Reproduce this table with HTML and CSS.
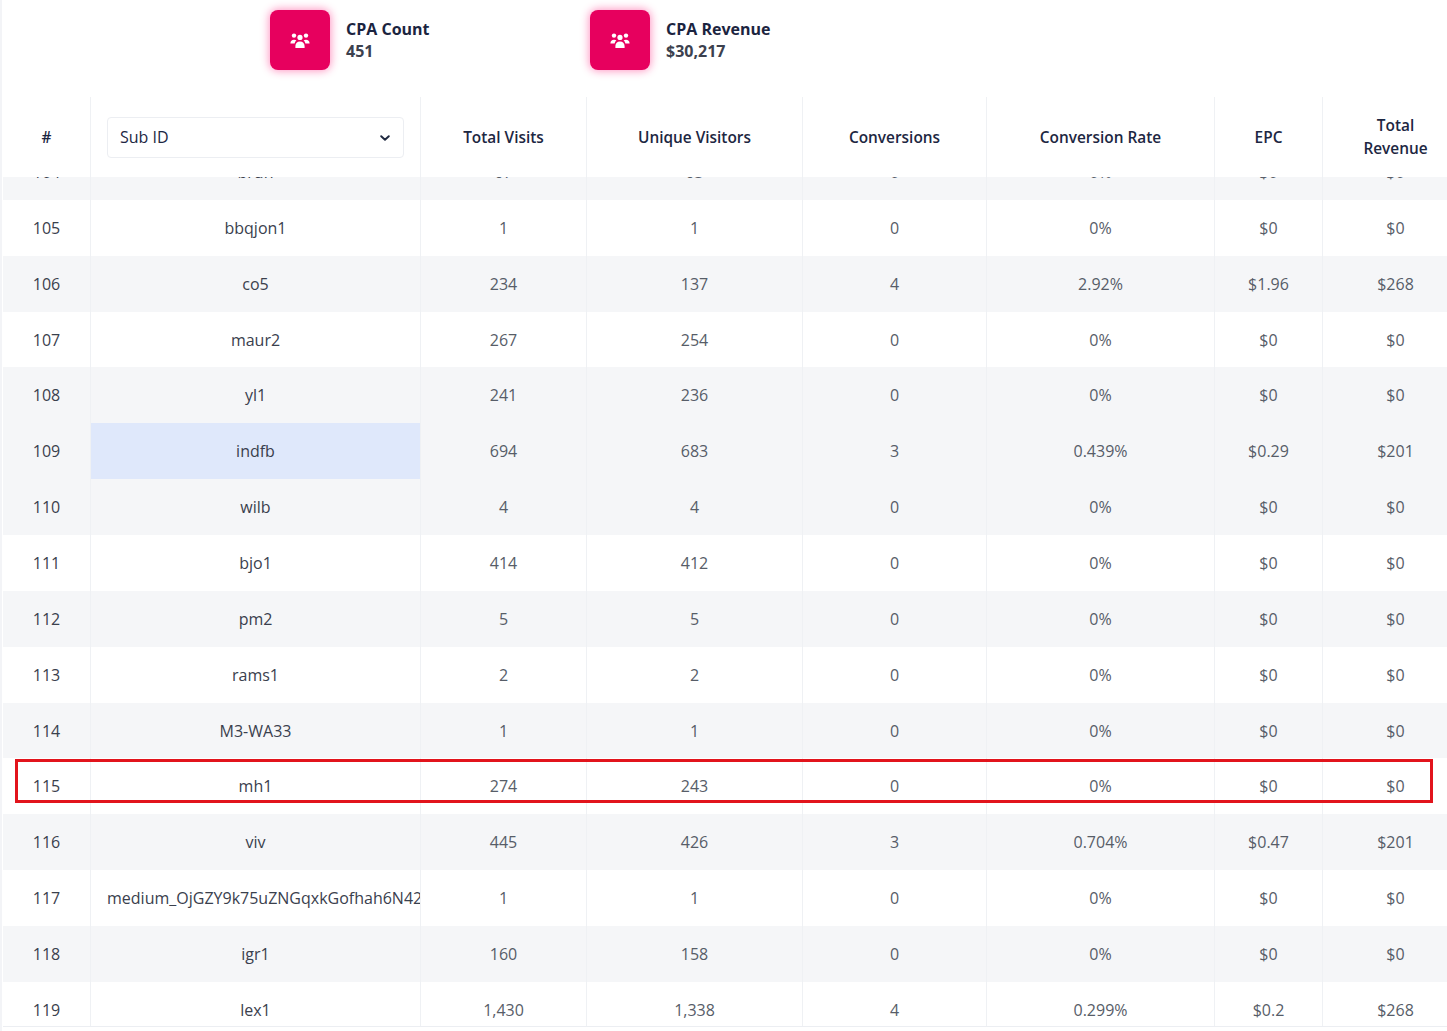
FILE: index.html
```html
<!DOCTYPE html>
<html lang="en">
<head>
<meta charset="utf-8">
<title>Sub ID Report</title>
<link rel="stylesheet" href="styles.css">
</head>
<body>
<div class="page">
  <div class="stats">
    <div class="stat">
      <div class="stat-icon">
        <svg viewBox="0 0 20 15" width="20" height="15" aria-hidden="true">
          <circle cx="4" cy="2.6" r="2.2" fill="#fff"/>
          <circle cx="16" cy="2.6" r="2.2" fill="#fff"/>
          <circle cx="10" cy="4.4" r="2.6" fill="#fff"/>
          <path d="M0.4 10.4C0.4 8.2 1.9 6.8 4 6.8C5 6.8 5.8 7.1 6.4 7.6C5.4 8.4 4.8 9.4 4.6 10.4Z" fill="#fff"/>
          <path d="M19.6 10.4C19.6 8.2 18.1 6.8 16 6.8C15 6.8 14.2 7.1 13.6 7.6C14.6 8.4 15.2 9.4 15.4 10.4Z" fill="#fff"/>
          <path d="M5.4 15V13.1C5.4 10.7 7.3 8.6 10 8.6C12.7 8.6 14.6 10.7 14.6 13.1V15Z" fill="#fff"/>
        </svg>
      </div>
      <div class="stat-text">
        <div class="stat-title">CPA Count</div>
        <div class="stat-value">451</div>
      </div>
    </div>
    <div class="stat">
      <div class="stat-icon">
        <svg viewBox="0 0 20 15" width="20" height="15" aria-hidden="true">
          <circle cx="4" cy="2.6" r="2.2" fill="#fff"/>
          <circle cx="16" cy="2.6" r="2.2" fill="#fff"/>
          <circle cx="10" cy="4.4" r="2.6" fill="#fff"/>
          <path d="M0.4 10.4C0.4 8.2 1.9 6.8 4 6.8C5 6.8 5.8 7.1 6.4 7.6C5.4 8.4 4.8 9.4 4.6 10.4Z" fill="#fff"/>
          <path d="M19.6 10.4C19.6 8.2 18.1 6.8 16 6.8C15 6.8 14.2 7.1 13.6 7.6C14.6 8.4 15.2 9.4 15.4 10.4Z" fill="#fff"/>
          <path d="M5.4 15V13.1C5.4 10.7 7.3 8.6 10 8.6C12.7 8.6 14.6 10.7 14.6 13.1V15Z" fill="#fff"/>
        </svg>
      </div>
      <div class="stat-text">
        <div class="stat-title">CPA Revenue</div>
        <div class="stat-value">$30,217</div>
      </div>
    </div>
  </div>

  <div class="table-scroll" id="tableScroll">
    <table class="report">
      <colgroup>
        <col class="w-num"><col class="w-sub"><col class="w-visits"><col class="w-unique">
        <col class="w-conv"><col class="w-rate"><col class="w-epc"><col class="w-rev">
      </colgroup>
      <thead>
        <tr>
          <th>#</th>
          <th class="th-select">
            <div class="select">
              <span>Sub ID</span>
              <svg class="chevron" viewBox="0 0 10 6" width="10" height="6" aria-hidden="true"><path d="M1.2 1.2L5 4.8L8.8 1.2" fill="none" stroke="#1f2940" stroke-width="1.9" stroke-linecap="round" stroke-linejoin="round"/></svg>
            </div>
          </th>
          <th>Total Visits</th>
          <th>Unique Visitors</th>
          <th>Conversions</th>
          <th>Conversion Rate</th>
          <th>EPC</th>
          <th class="th-wrap">Total Revenue</th>
        </tr>
      </thead>
      <tbody>
        <tr><td class="c-id">104</td><td class="c-sub">brun</td><td>67</td><td>63</td><td>0</td><td>0%</td><td>$0</td><td>$0</td></tr>
        <tr><td class="c-id">105</td><td class="c-sub">bbqjon1</td><td>1</td><td>1</td><td>0</td><td>0%</td><td>$0</td><td>$0</td></tr>
        <tr><td class="c-id">106</td><td class="c-sub">co5</td><td>234</td><td>137</td><td>4</td><td>2.92%</td><td>$1.96</td><td>$268</td></tr>
        <tr><td class="c-id">107</td><td class="c-sub">maur2</td><td>267</td><td>254</td><td>0</td><td>0%</td><td>$0</td><td>$0</td></tr>
        <tr><td class="c-id">108</td><td class="c-sub">yl1</td><td>241</td><td>236</td><td>0</td><td>0%</td><td>$0</td><td>$0</td></tr>
        <tr class="is-hover"><td class="c-id">109</td><td class="c-sub is-active">indfb</td><td>694</td><td>683</td><td>3</td><td>0.439%</td><td>$0.29</td><td>$201</td></tr>
        <tr><td class="c-id">110</td><td class="c-sub">wilb</td><td>4</td><td>4</td><td>0</td><td>0%</td><td>$0</td><td>$0</td></tr>
        <tr><td class="c-id">111</td><td class="c-sub">bjo1</td><td>414</td><td>412</td><td>0</td><td>0%</td><td>$0</td><td>$0</td></tr>
        <tr><td class="c-id">112</td><td class="c-sub">pm2</td><td>5</td><td>5</td><td>0</td><td>0%</td><td>$0</td><td>$0</td></tr>
        <tr><td class="c-id">113</td><td class="c-sub">rams1</td><td>2</td><td>2</td><td>0</td><td>0%</td><td>$0</td><td>$0</td></tr>
        <tr><td class="c-id">114</td><td class="c-sub">M3-WA33</td><td>1</td><td>1</td><td>0</td><td>0%</td><td>$0</td><td>$0</td></tr>
        <tr><td class="c-id">115</td><td class="c-sub">mh1</td><td>274</td><td>243</td><td>0</td><td>0%</td><td>$0</td><td>$0</td></tr>
        <tr><td class="c-id">116</td><td class="c-sub">viv</td><td>445</td><td>426</td><td>3</td><td>0.704%</td><td>$0.47</td><td>$201</td></tr>
        <tr><td class="c-id">117</td><td class="c-sub">medium_OjGZY9k75uZNGqxkGofhah6N42xQ8vLp</td><td>1</td><td>1</td><td>0</td><td>0%</td><td>$0</td><td>$0</td></tr>
        <tr><td class="c-id">118</td><td class="c-sub">igr1</td><td>160</td><td>158</td><td>0</td><td>0%</td><td>$0</td><td>$0</td></tr>
        <tr><td class="c-id">119</td><td class="c-sub">lex1</td><td>1,430</td><td>1,338</td><td>4</td><td>0.299%</td><td>$0.2</td><td>$268</td></tr>
      </tbody>
    </table>
  </div>
</div>
<div class="highlight-box"></div>
<script src="script.js"></script>
</body>
</html>
```

FILE: styles.css
```css
* { box-sizing: border-box; }

html, body {
  margin: 0;
  padding: 0;
  background: #ffffff;
}

body {
  font-family: "Open Sans", "Noto Sans", "Liberation Sans", sans-serif;
  color: #4b515c;
  overflow: hidden;
}

.page {
  border-left: 2px solid #f3f4f7;
  padding-left: 1px;
  min-height: 100vh;
}

/* ---------- stat cards ---------- */
.stats {
  display: flex;
  height: 97px;
  padding: 10px 0 0 267px;
}

.stat {
  width: 320px;
  display: flex;
  align-items: center;
  gap: 16px;
  height: 60px;
}

.stat-icon {
  width: 60px;
  height: 60px;
  flex: 0 0 60px;
  border-radius: 8px;
  background: #e7005e;
  box-shadow: 0 0 9px 1px rgba(255, 20, 120, 0.45);
  display: flex;
  align-items: center;
  justify-content: center;
}

.stat-icon svg { display: block; margin-top: 1px; }

.stat-text {
  display: flex;
  flex-direction: column;
  font-weight: 700;
  font-size: 16px;
  line-height: 22px;
}

.stat-title { color: #1b2440; }
.stat-value { color: #3c414e; }

/* ---------- table ---------- */
.table-scroll {
  height: 930px;
  overflow: hidden;
  border-bottom: 1px solid #eceef2;
}

.report {
  width: 1466px;
  table-layout: fixed;
  border-collapse: separate;
  border-spacing: 0;
  font-size: 16px;
}

.w-num { width: 88px; }
.w-sub { width: 330px; }
.w-visits { width: 166px; }
.w-unique { width: 216px; }
.w-conv { width: 184px; }
.w-rate { width: 228px; }
.w-epc { width: 108px; }
.w-rev { width: 146px; }

.report th {
  position: sticky;
  top: 0;
  z-index: 2;
  height: 80px;
  background: #ffffff;
  color: #1d2742;
  font-weight: 600;
  font-size: 15.4px;
  line-height: 23px;
  text-align: center;
  vertical-align: middle;
  padding: 0 16px;
  border-right: 1px solid #eff1f4;
}

.report th.th-wrap { padding: 0 26px; }

.report th.th-select { padding: 0 16px; text-align: left; font-size: 16px; }

.select {
  height: 41px;
  border: 1px solid #eceef2;
  border-radius: 4px;
  display: flex;
  align-items: center;
  justify-content: space-between;
  padding: 0 13px 0 12px;
  font-weight: 500;
  color: #1d2742;
  margin-top: 1px;
}

.chevron { display: block; }

.report td {
  height: 55.86px;
  padding: 0 16px;
  text-align: center;
  vertical-align: middle;
  white-space: nowrap;
  overflow: hidden;
  border-right: 1px solid #eff1f4;
  color: #575d68;
  font-weight: 400;
  line-height: 22px;
}

.report tbody tr:nth-child(odd) td { background: #f5f6f8; }
.report tbody tr.is-hover td { background: #f5f6f8; }
.report tbody tr td.is-active { background: #dfe8fb; }

.report td.c-id,
.report td.c-sub {
  color: #3a404d;
  font-weight: 500;
}

.report td.c-sub { text-overflow: clip; }

/* ---------- annotation overlay ---------- */
.highlight-box {
  position: absolute;
  left: 15px;
  top: 759px;
  width: 1418px;
  height: 44px;
  border: 3px solid #e2141c;
  pointer-events: none;
}
```

FILE: script.js
```js
document.getElementById('tableScroll').scrollTop = 33;
```
